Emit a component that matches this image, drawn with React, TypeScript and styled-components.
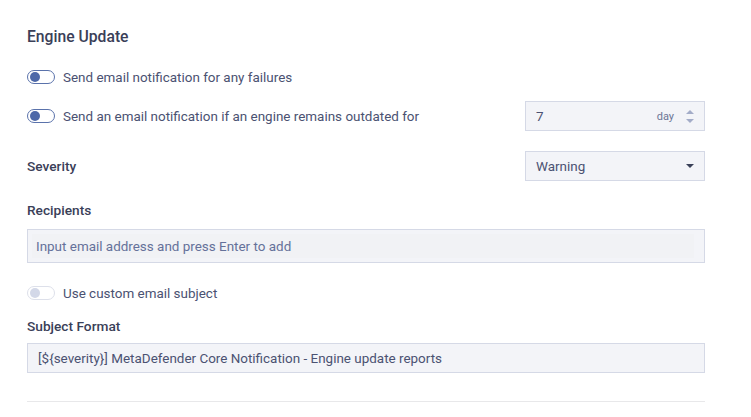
import React from "react";
import styled, { createGlobalStyle } from "styled-components";

const GlobalStyle = createGlobalStyle`
  body {
    margin: 0;
    background: #ffffff;
    font-family: Roboto, "Liberation Sans", sans-serif;
  }
`;

const Page = styled.div`
  width: 678px;
  padding: 27px 0 0 27px;
  display: flex;
  flex-direction: column;
`;

const Heading = styled.div`
  font-size: 15.7px;
  line-height: 20px;
  font-weight: 500;
  color: #3a4058;
`;

const Row = styled.div<{ $top: number; $h: number }>`
  margin-top: ${(p) => p.$top}px;
  height: ${(p) => p.$h}px;
  display: flex;
  align-items: center;
  justify-content: space-between;
`;

const ToggleLabel = styled.label`
  display: flex;
  align-items: center;
  gap: 8px;
  font-size: 13.45px;
  color: #4b5272;
`;

const Track = styled.span<{ $disabled?: boolean }>`
  width: 28px;
  height: 14px;
  box-sizing: border-box;
  border-radius: 7px;
  border: 1.5px solid ${(p) => (p.$disabled ? "#dde0ea" : "#5a72ab")};
  display: flex;
  align-items: center;
  padding-left: 1.5px;
`;

const Knob = styled.span<{ $disabled?: boolean }>`
  width: 10px;
  height: 10px;
  border-radius: 50%;
  background: ${(p) => (p.$disabled ? "#d3d8e8" : "#4d68a8")};
`;

const FieldLabel = styled.div<{ $top: number }>`
  margin-top: ${(p) => p.$top}px;
  font-size: 13.7px;
  line-height: 18px;
  font-weight: 500;
  color: #3a4058;
`;

const Box = styled.div<{ $w?: number; $h: number; $top?: number }>`
  box-sizing: border-box;
  width: ${(p) => (p.$w ? `${p.$w}px` : "100%")};
  height: ${(p) => p.$h}px;
  margin-top: ${(p) => p.$top ?? 0}px;
  background: #f3f4f8;
  border: 1px solid #d5d9e6;
  display: flex;
  align-items: center;
  padding: 0 10px 0 8px;
  font-size: 13.45px;
  color: #4b5272;
`;

const Value = styled.span`
  flex: 1;
  padding-left: 2px;
`;

const Unit = styled.span`
  font-size: 11px;
  color: #6d7696;
  margin-right: 12px;
`;

const Spinner = styled.span`
  display: flex;
  flex-direction: column;
  gap: 5px;
`;

const Caret = styled.span<{ $up?: boolean; $color: string }>`
  width: 0;
  height: 0;
  border-left: 4.5px solid transparent;
  border-right: 4.5px solid transparent;
  ${(p) =>
    p.$up
      ? `border-bottom: 4px solid ${p.$color};`
      : `border-top: 4px solid ${p.$color};`}
`;

const InnerInput = styled.div`
  flex: 1;
  align-self: stretch;
  margin: 4px 0 4px -4px;
  padding-left: 4px;
  background: #f1f2f5;
  display: flex;
  align-items: center;
  color: #65719a;
`;

const Divider = styled.div`
  margin-top: 28px;
  height: 1px;
  background: #e8e8ea;
`;

function Toggle({ label, disabled }: { label: string; disabled?: boolean }) {
  return (
    <ToggleLabel>
      <Track $disabled={disabled}>
        <Knob $disabled={disabled} />
      </Track>
      {label}
    </ToggleLabel>
  );
}

export default function App() {
  return (
    <>
      <GlobalStyle />
      <Page>
        <Heading>Engine Update</Heading>
        <Row $top={15} $h={30}>
          <Toggle label="Send email notification for any failures" />
        </Row>
        <Row $top={9} $h={30}>
          <Toggle label="Send an email notification if an engine remains outdated for" />
          <Box $w={180} $h={30}>
            <Value>7</Value>
            <Unit>day</Unit>
            <Spinner>
              <Caret $up $color="#a3acc8" />
              <Caret $color="#a3acc8" />
            </Spinner>
          </Box>
        </Row>
        <Row $top={20} $h={30}>
          <FieldLabel $top={0}>Severity</FieldLabel>
          <Box $w={180} $h={30}>
            <Value>Warning</Value>
            <Caret $color="#3a4058" />
          </Box>
        </Row>
        <FieldLabel $top={20}>Recipients</FieldLabel>
        <Box $h={34} $top={10}>
          <InnerInput>Input email address and press Enter to add</InnerInput>
        </Box>
        <Row $top={20} $h={20}>
          <Toggle label="Use custom email subject" disabled />
        </Row>
        <FieldLabel $top={14}>Subject Format</FieldLabel>
        <Box $h={30} $top={8}>
          <Value>[${"{"}severity{"}"}] MetaDefender Core Notification - Engine update reports</Value>
        </Box>
        <Divider />
      </Page>
    </>
  );
}
